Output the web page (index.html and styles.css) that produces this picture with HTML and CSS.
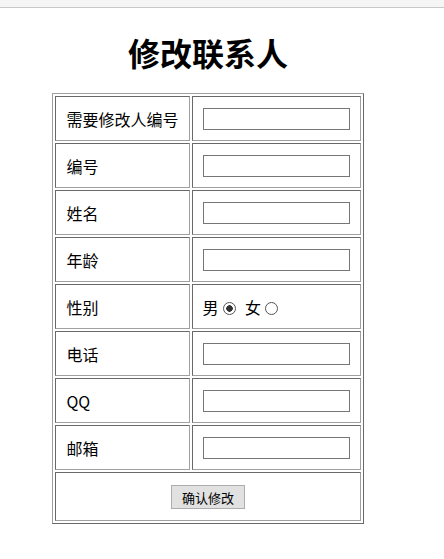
FILE: index.html
```html
<!DOCTYPE html>
<html lang="zh-CN">
  <head>
    <meta charset="UTF-8" />
    <title>修改联系人</title>
    <link rel="stylesheet" href="styles.css">
  </head>
  <body>
    <div class="bookmark-bar"></div>
    <div class="page">
      <h1>修改联系人</h1>
      <form class="edit-form">
        <table class="contact-table">
          <tr>
            <td class="label">需要修改人编号</td>
            <td class="field"><input type="text" name="oldId" /></td>
          </tr>
          <tr>
            <td class="label">编号</td>
            <td class="field"><input type="text" name="id" /></td>
          </tr>
          <tr>
            <td class="label">姓名</td>
            <td class="field"><input type="text" name="name" /></td>
          </tr>
          <tr>
            <td class="label">年龄</td>
            <td class="field"><input type="text" name="age" /></td>
          </tr>
          <tr>
            <td class="label">性别</td>
            <td class="field gender">
              男<input type="radio" name="gender" value="男" checked />
              女<input type="radio" name="gender" value="女" />
            </td>
          </tr>
          <tr>
            <td class="label">电话</td>
            <td class="field"><input type="text" name="phone" /></td>
          </tr>
          <tr>
            <td class="label">QQ</td>
            <td class="field"><input type="text" name="qq" /></td>
          </tr>
          <tr>
            <td class="label">邮箱</td>
            <td class="field"><input type="text" name="email" /></td>
          </tr>
          <tr>
            <td class="submit-row" colspan="2">
              <button type="submit">确认修改</button>
            </td>
          </tr>
        </table>
      </form>
    </div>
  </body>
</html>
```

FILE: styles.css
```css
* {
  box-sizing: border-box;
}

body {
  margin: 0;
  background-color: #fff;
  color: #000;
  font-family: "Noto Sans CJK SC", "Noto Sans", sans-serif;
}

.bookmark-bar {
  height: 8px;
  background-color: #f5f5f5;
  border-bottom: 1px solid #c8c8c8;
}

.page {
  width: 416px;
}

h1 {
  margin: 24px 0 0;
  font-size: 32px;
  line-height: 40px;
  font-weight: bold;
  text-align: center;
}

.edit-form {
  margin-top: 21px;
}

.contact-table {
  margin: 0 auto;
  border: 1px solid;
  border-color: #a0a0a0 #696969 #696969 #a0a0a0;
  border-spacing: 2px;
}

.contact-table td {
  height: 45px;
  padding: 0 10px;
  border: 1px solid;
  border-color: #696969 #a0a0a0 #a0a0a0 #696969;
  font-size: 16px;
  vertical-align: middle;
}

.label {
  width: 134px;
  white-space: nowrap;
}

.field {
  width: 169px;
}

.field input[type="text"] {
  display: block;
  width: 147px;
  height: 22px;
  margin: 0;
  padding: 1px 2px;
  border: 1px solid #767676;
  font-size: 13px;
}

.gender input[type="radio"] {
  appearance: none;
  -webkit-appearance: none;
  width: 13px;
  height: 13px;
  margin: 0 6px 0 4px;
  border: 1px solid #555;
  border-radius: 50%;
  background-color: #fff;
  vertical-align: -1px;
}

.gender input[type="radio"]:checked {
  background: radial-gradient(circle, #333 0 3px, #fff 3.5px);
}

.contact-table .submit-row {
  height: 49px;
  text-align: center;
}

button {
  height: 24px;
  padding: 0 10px;
  background-color: #e1e1e1;
  border: 1px solid #adadad;
  border-radius: 0;
  font-family: "Noto Sans CJK SC", sans-serif;
  font-size: 13px;
  color: #000;
}
```
